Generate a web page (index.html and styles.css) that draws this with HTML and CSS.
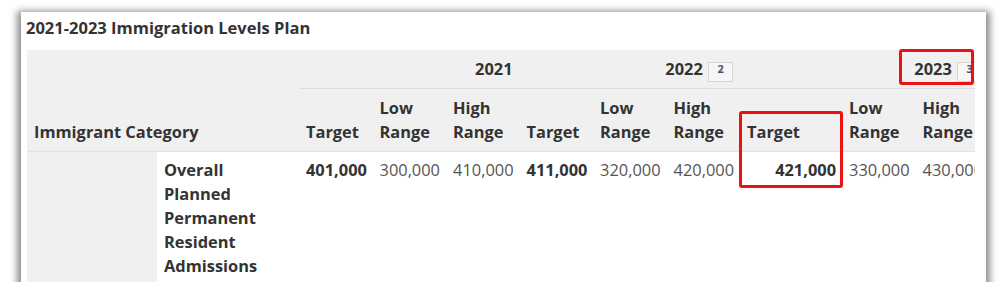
FILE: index.html
```html
<!DOCTYPE html>
<html lang="en">
<head>
<meta charset="utf-8">
<title>2021-2023 Immigration Levels Plan</title>
<link rel="stylesheet" href="styles.css">
</head>
<body>
<div class="panel">
  <h2 class="title">2021-2023 Immigration Levels Plan</h2>
  <div class="table-wrap">
    <table class="levels">
      <colgroup>
        <col class="c-cat"><col class="c-sub">
        <col class="c-n"><col class="c-n"><col class="c-n">
        <col class="c-n"><col class="c-n"><col class="c-n">
        <col class="c-wide"><col class="c-n"><col class="c-n">
      </colgroup>
      <thead>
        <tr class="years">
          <th class="cat" colspan="2" rowspan="2">Immigrant Category</th>
          <th class="year" colspan="3">2021</th>
          <th class="year" colspan="3">2022 <span class="fn">2</span></th>
          <th class="year" colspan="3">2023 <span class="fn">3</span></th>
        </tr>
        <tr class="subs">
          <th>Target</th><th>Low<br>Range</th><th>High<br>Range</th>
          <th>Target</th><th>Low<br>Range</th><th>High<br>Range</th>
          <th>Target</th><th>Low<br>Range</th><th>High<br>Range</th>
        </tr>
      </thead>
      <tbody>
        <tr>
          <td class="blank"></td>
          <th class="rowhead">Overall<br>Planned<br>Permanent<br>Resident<br>Admissions</th>
          <td class="tgt">401,000</td><td>300,000</td><td>410,000</td>
          <td class="tgt">411,000</td><td>320,000</td><td>420,000</td>
          <td class="tgt">421,000</td><td>330,000</td><td>430,000</td>
        </tr>
      </tbody>
    </table>
  </div>
  <div class="mark mark-year"></div>
  <div class="mark mark-target"></div>
</div>
</body>
</html>
```

FILE: styles.css
```css
html, body {
  margin: 0;
  padding: 0;
  background: #ffffff;
}
body {
  font-family: "Open Sans", "Noto Sans", "DejaVu Sans", sans-serif;
  color: #333;
}
.panel {
  position: relative;
  margin: 12px 0 0 21px;
  width: 965px;
  height: 270px;
  background: #fff;
  box-shadow: 0 3px 7px 4px rgba(0, 0, 0, 0.45);
}
.title {
  margin: 0;
  padding: 5px 0 0 5px;
  height: 33px;
  font-size: 16.5px;
  line-height: 22px;
  font-weight: 700;
  color: #333;
}
.table-wrap {
  margin-left: 6px;
  width: 948px;
  height: 232px;
  overflow: hidden;
}
.levels {
  border-collapse: collapse;
  table-layout: fixed;
  width: 963px;
  font-size: 16.4px;
  line-height: 24px;
}
.c-cat { width: 130px; }
.c-sub { width: 143px; }
.c-n { width: 73.5px; }
.c-wide { width: 102px; }
.levels thead th {
  background: #f0f0f0;
  font-weight: 700;
  color: #333;
  text-align: left;
  vertical-align: bottom;
  padding: 0 6px;
}
.levels .years th {
  height: 38px;
}
.levels thead th.cat {
  padding: 0 7px 7px 7px;
  border-bottom: 1px solid #e2e2e2;
}
.levels thead th.year {
  text-align: right;
  vertical-align: middle;
  padding: 0 8px 0 6px;
  border-bottom: 1px solid #dcdcdc;
}
.levels .subs th {
  padding: 7px 6px 7px 6px;
  border-bottom: 1px solid #e2e2e2;
}
.fn {
  display: inline-block;
  box-sizing: border-box;
  width: 25px;
  height: 20px;
  margin-left: 1px;
  border: 1px solid #d6d6d6;
  background: #f6f6f6;
  font-size: 11px;
  line-height: 12px;
  font-weight: 700;
  color: #4a4f66;
  text-align: center;
  vertical-align: 2px;
}
.levels tbody td,
.levels tbody th {
  vertical-align: top;
  padding: 6px 7px 40px 6px;
  background: #fff;
}
.levels tbody td {
  text-align: right;
  font-weight: 400;
  color: #555;
}
.levels tbody td.tgt {
  font-weight: 700;
  color: #333;
}
.levels tbody td.blank {
  background: #f0f0f0;
}
.levels tbody th.rowhead {
  text-align: left;
  font-weight: 700;
  color: #333;
  padding-left: 7px;
}
.mark {
  position: absolute;
  box-sizing: border-box;
  border: 3px solid #ee1111;
  border-radius: 3px;
}
.mark-year {
  left: 878px;
  top: 37px;
  width: 75px;
  height: 36px;
}
.mark-target {
  left: 718px;
  top: 99px;
  width: 104px;
  height: 77px;
}
```
